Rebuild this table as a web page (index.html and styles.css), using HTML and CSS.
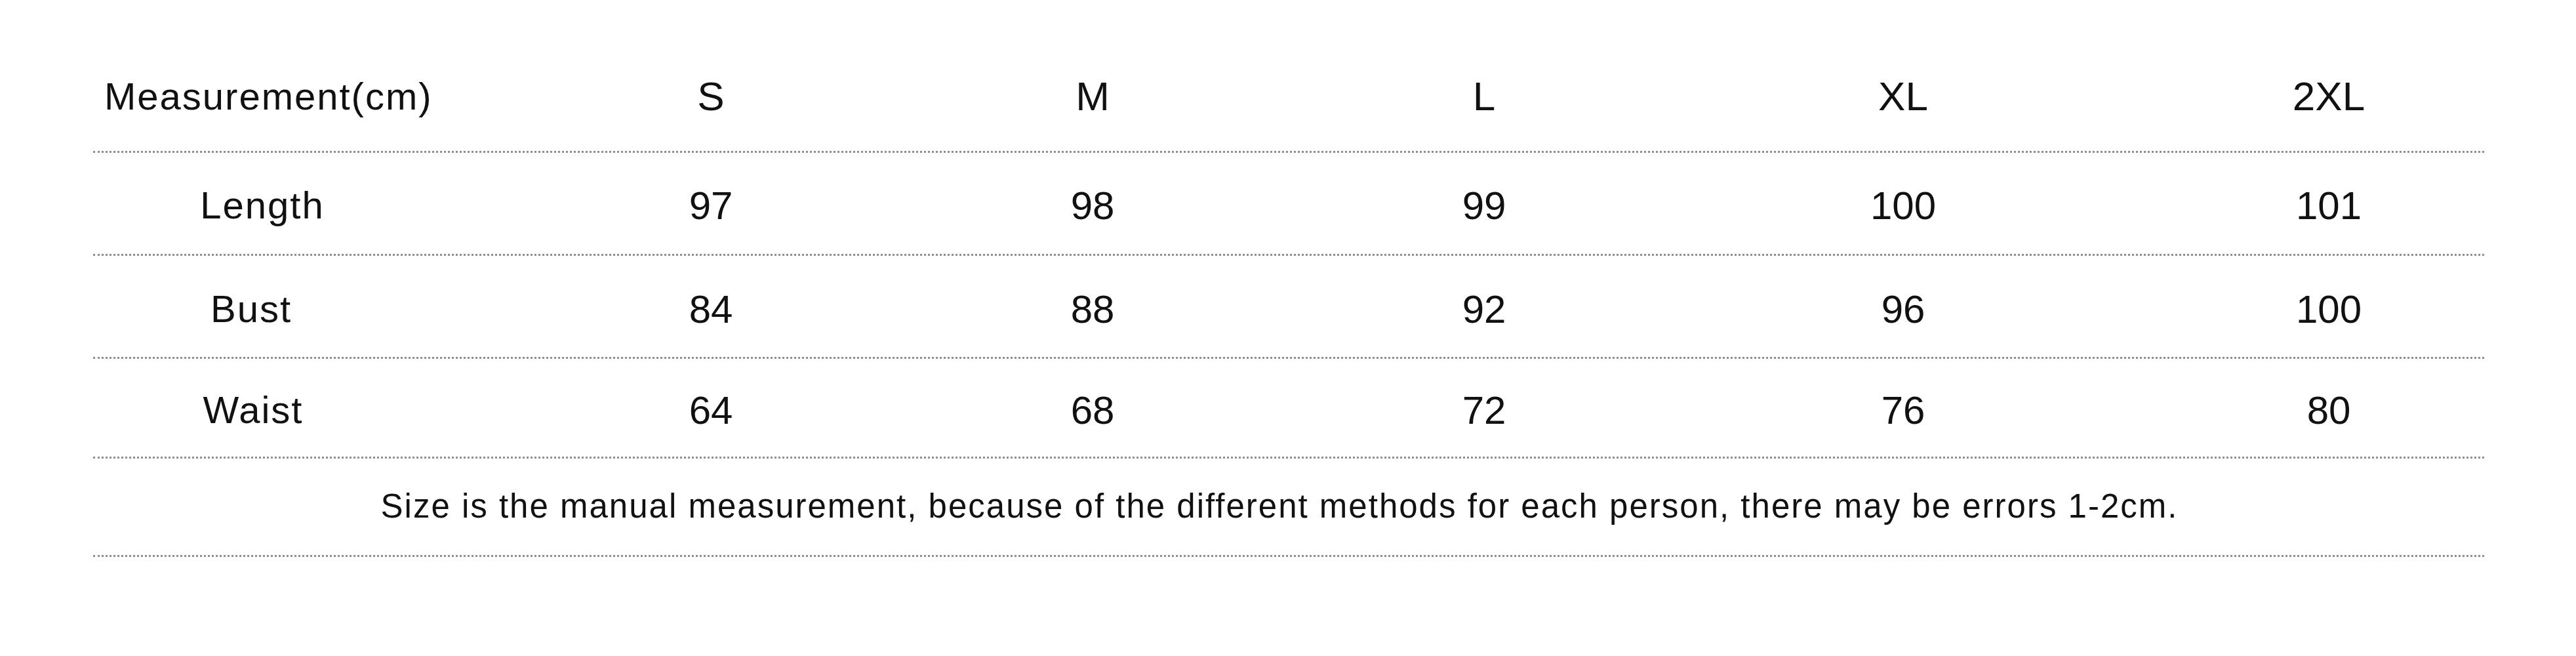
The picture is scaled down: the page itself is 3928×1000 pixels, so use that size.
FILE: index.html
```html
<!DOCTYPE html>
<html lang="en">
<head>
<meta charset="utf-8">
<title>Size chart</title>
<link rel="stylesheet" href="styles.css">
</head>
<body>
<div class="page">
  <div class="chart">
    <div class="row row-head">
      <div class="cell label-head">Measurement(cm)</div>
      <div class="cell size">S</div>
      <div class="cell size">M</div>
      <div class="cell size">L</div>
      <div class="cell size">XL</div>
      <div class="cell size">2XL</div>
    </div>
    <div class="row row-1">
      <div class="cell label label-length">Length</div>
      <div class="cell val">97</div>
      <div class="cell val">98</div>
      <div class="cell val">99</div>
      <div class="cell val">100</div>
      <div class="cell val">101</div>
    </div>
    <div class="row row-2">
      <div class="cell label label-bust">Bust</div>
      <div class="cell val">84</div>
      <div class="cell val">88</div>
      <div class="cell val">92</div>
      <div class="cell val">96</div>
      <div class="cell val">100</div>
    </div>
    <div class="row row-3">
      <div class="cell label label-waist">Waist</div>
      <div class="cell val">64</div>
      <div class="cell val">68</div>
      <div class="cell val">72</div>
      <div class="cell val">76</div>
      <div class="cell val">80</div>
    </div>
    <div class="note-row">
      <p class="note">Size is the manual measurement, because of the different methods for each person, there may be errors 1-2cm.</p>
    </div>
  </div>
</div>
</body>
</html>
```

FILE: styles.css
```css
html, body {
  margin: 0;
  padding: 0;
  background: #ffffff;
}

body {
  font-family: "Liberation Sans", Arial, sans-serif;
  color: #111111;
}

.page {
  padding: 0 140px 0 142px;
}

.chart {
  display: flex;
  flex-direction: column;
}

.row {
  display: grid;
  grid-template-columns: 506px 872px 292px 902px 376px 922px;
  align-items: center;
  box-sizing: border-box;
  border-bottom: 3px dotted #8e8e8e;
}

.row-head {
  height: 233px;
  padding-top: 64px;
}

.row-1 {
  height: 157px;
  padding-top: 6px;
}

.row-2 {
  height: 157px;
  padding-top: 8px;
}

.row-3 {
  height: 152px;
  padding-top: 8px;
}

.cell {
  text-align: center;
  white-space: nowrap;
  line-height: 1.15;
}

.label-head {
  text-align: left;
  padding-left: 17px;
  font-size: 58px;
  letter-spacing: 2px;
}

.label {
  font-size: 58px;
  letter-spacing: 2px;
}

.label-length {
  padding-left: 10px;
}

.label-bust {
  padding-right: 24px;
}

.label-waist {
  padding-right: 18px;
}

.size {
  font-size: 62px;
}

.val {
  font-size: 60px;
}

.note-row {
  box-sizing: border-box;
  height: 150px;
  display: flex;
  align-items: center;
  justify-content: center;
  padding-right: 28px;
  border-bottom: 3px dotted #8e8e8e;
}

.note {
  margin: 0;
  font-size: 51px;
  letter-spacing: 2px;
  line-height: 1.15;
  white-space: nowrap;
}
```
